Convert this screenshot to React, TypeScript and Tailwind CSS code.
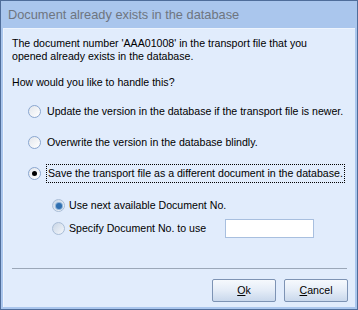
import React from "react"

const Radio = ({ checked, tone = "normal" }: { checked?: boolean; tone?: "normal" | "soft" }) => {
  if (tone === "soft") {
    return (
      <span className="relative inline-flex h-[13px] w-[13px] shrink-0 items-center justify-center rounded-full border border-[#a9bdd6] bg-gradient-to-br from-[#c9d6e6] to-[#f4f7fb]">
        {checked && <span className="h-[6px] w-[6px] rounded-full bg-[#2f6fb0] ring-1 ring-[#8fb4da]" />}
      </span>
    )
  }
  return (
    <span className="relative inline-flex h-[13px] w-[13px] shrink-0 items-center justify-center rounded-full border border-[#8aa6cf] bg-gradient-to-br from-[#e2e6ec] to-white">
      {checked && <span className="h-[5px] w-[5px] rounded-full bg-black" />}
    </span>
  )
}

const Button = ({ label, hot }: { label: string; hot: string }) => (
  <button
    type="button"
    className="flex h-[23px] w-[64px] items-center justify-center rounded-[2px] border border-[#7d93b4] bg-gradient-to-b from-[#f6f9fd] via-[#e4ecf7] to-[#c9d8ec] text-[10.6px] text-black"
  >
    <span className="underline">{hot}</span>
    {label.slice(1)}
  </button>
)

export default function App() {
  return (
    <div className="h-[310px] w-[358px] border border-[#4f6d9a] bg-[#aac6ed] font-['Liberation_Sans',Arial,sans-serif] text-black">
      <div className="flex h-full flex-col px-[2px] pb-[2px]">
        <div className="flex h-[27px] shrink-0 items-center pl-[5px] text-[12.8px] text-[#6e7580]">
          Document already exists in the database
        </div>
        <div className="flex flex-1 flex-col whitespace-nowrap border-l border-t border-[#eef4fd] bg-[#e1ecfc] text-[10.6px] leading-[13px]">
          <div className="px-[8px] pt-[8px]">
            <p>The document number 'AAA01008' in the transport file that you</p>
            <p>opened already exists in the database.</p>
            <p className="mt-[13px]">How would you like to handle this?</p>
          </div>

          <div className="mt-[16px] flex flex-col gap-[18px] pl-[24px]">
            <div className="flex items-center gap-[6px]">
              <Radio />
              <span>Update the version in the database if the transport file is newer.</span>
            </div>
            <div className="flex items-center gap-[6px]">
              <Radio />
              <span>Overwrite the version in the database blindly.</span>
            </div>
            <div className="flex h-[13px] items-center gap-[5px]">
              <Radio checked />
              <span className="border border-dotted border-black px-[1px] py-[2px]">
                Save the transport file as a different document in the database.
              </span>
            </div>
          </div>

          <div className="mt-[19px] flex flex-col gap-[7px] pl-[48px]">
            <div className="flex items-center gap-[4px]">
              <Radio checked tone="soft" />
              <span>Use next available Document No.</span>
            </div>
            <div className="flex items-center">
              <Radio tone="soft" />
              <span className="ml-[4px] w-[156px]">Specify Document No. to use</span>
              <div className="h-[19px] w-[89px] border border-[#a8bfdf] bg-white" />
            </div>
          </div>

          <div className="mx-[8px] mt-auto border-t border-[#9ba7b8]" />
          <div className="flex justify-end gap-[8px] px-[7px] pb-[5px] pt-[10px]">
            <Button label="Ok" hot="O" />
            <Button label="Cancel" hot="C" />
          </div>
        </div>
      </div>
    </div>
  )
}
